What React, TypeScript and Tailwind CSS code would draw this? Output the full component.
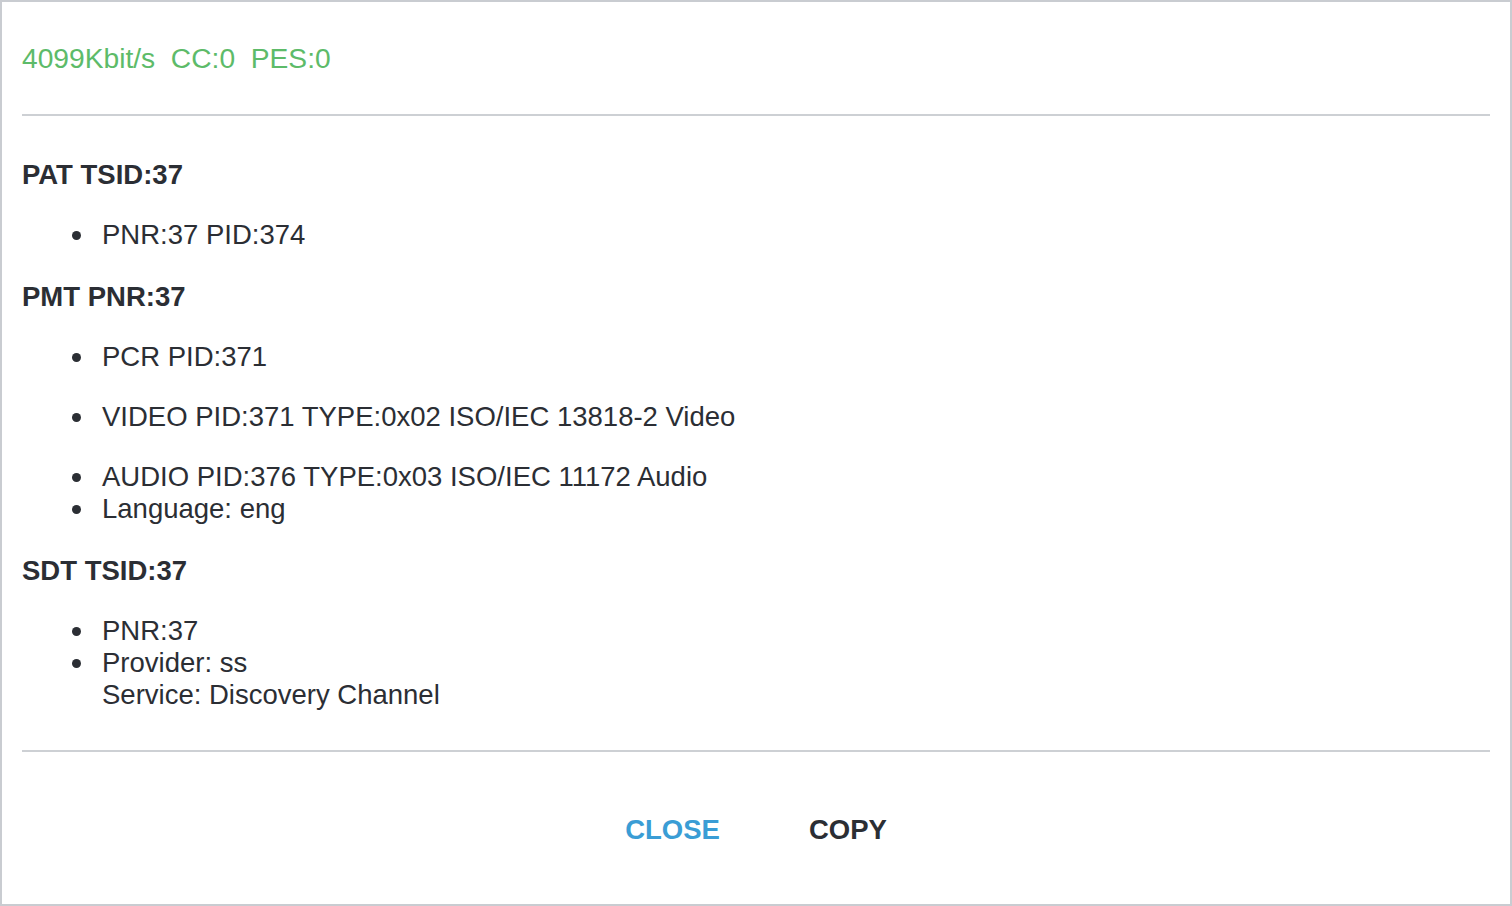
import React from "react";

const Item = ({ children }: { children: React.ReactNode }) => (
  <li className="flex items-start">
    <span className="mt-[12px] ml-[50px] w-[9px] h-[9px] shrink-0 rounded-full bg-[#2b2e34]" />
    <span className="ml-[21px]">{children}</span>
  </li>
);

export default function App() {
  return (
    <div
      className="w-[1512px] h-[906px] bg-white border-2 border-[#c9ccd1] px-[20px] text-[27.5px] leading-[32px] text-[#2b2e34]"
      style={{ fontFamily: '"Liberation Sans", Arial, sans-serif' }}
    >
      <div className="pt-[40px] text-[28.2px] text-[#5dbb69] whitespace-pre">
        4099Kbit/s  CC:0  PES:0
      </div>
      <div className="mt-[40px] h-[2px] bg-[#cdd0d4]" />

      <div className="mt-[43px]">
        <h4 className="font-bold">PAT TSID:37</h4>
        <ul className="mt-[28px]">
          <Item>PNR:37 PID:374</Item>
        </ul>

        <h4 className="mt-[30px] font-bold">PMT PNR:37</h4>
        <ul className="mt-[28px]">
          <Item>PCR PID:371</Item>
        </ul>
        <ul className="mt-[28px]">
          <Item>VIDEO PID:371 TYPE:0x02 ISO/IEC 13818-2 Video</Item>
        </ul>
        <ul className="mt-[28px]">
          <Item>AUDIO PID:376 TYPE:0x03 ISO/IEC 11172 Audio</Item>
          <Item>Language: eng</Item>
        </ul>

        <h4 className="mt-[30px] font-bold">SDT TSID:37</h4>
        <ul className="mt-[28px]">
          <Item>PNR:37</Item>
          <Item>
            Provider: ss
            <br />
            Service: Discovery Channel
          </Item>
        </ul>
      </div>

      <div className="mt-[39px] h-[2px] bg-[#cdd0d4]" />

      <div className="mt-[62px] flex justify-center gap-[89px] font-bold">
        <button className="text-[#3a9dd5]">CLOSE</button>
        <button className="text-[#2b2e34]">COPY</button>
      </div>
    </div>
  );
}
